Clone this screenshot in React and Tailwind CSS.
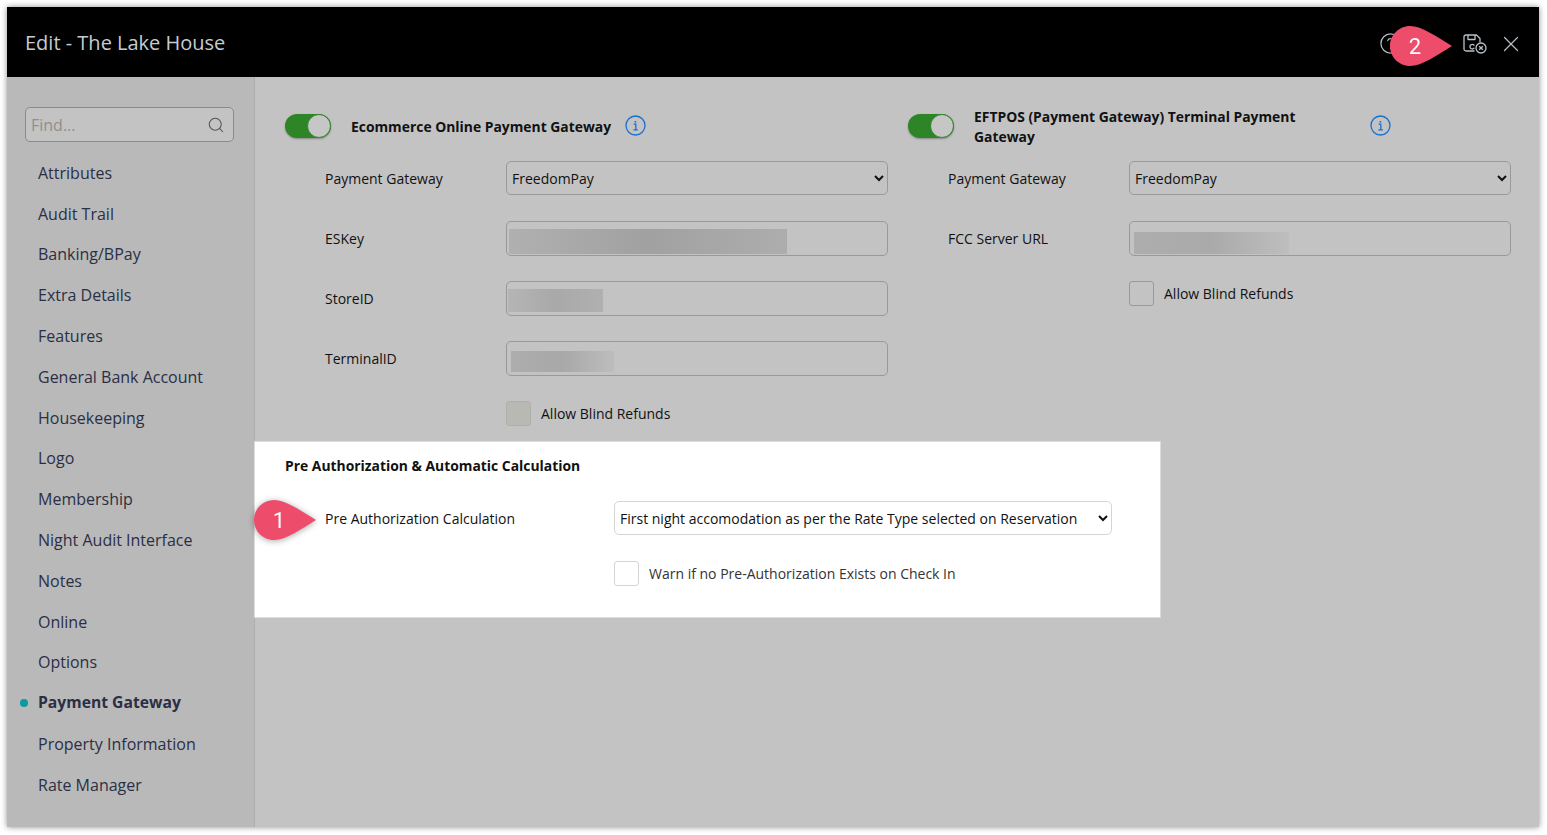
import { CircleHelp, Search, X } from "lucide-react";

const NAV_ITEMS = [
  "Attributes",
  "Audit Trail",
  "Banking/BPay",
  "Extra Details",
  "Features",
  "General Bank Account",
  "Housekeeping",
  "Logo",
  "Membership",
  "Night Audit Interface",
  "Notes",
  "Online",
  "Options",
  "Payment Gateway",
  "Property Information",
  "Rate Manager",
];

export default function App() {
  return (
    <div className="h-screen w-full overflow-hidden bg-white p-[7px] font-['Open_Sans',sans-serif]">
      <div className="flex h-[820px] w-[1532px] flex-col shadow-[0_0_6px_rgba(0,0,0,0.45)]">
        <Header />
        <div className="flex min-h-0 flex-1">
          <Sidebar />
          <main className="flex-1 border-l border-[#adadad] bg-[#c3c3c3]">
            <div className="flex h-[364px]">
              <EcommerceColumn />
              <TerminalColumn />
            </div>
            <PreAuthPanel />
          </main>
        </div>
      </div>
    </div>
  );
}

function Header() {
  return (
    <header className="relative flex h-[70px] shrink-0 items-center justify-between bg-black pr-[15px] pl-[18px]">
      <h1 className="pt-[2px] text-[20px] text-[#c5ccd3]">Edit - The Lake House</h1>
      <div className="flex items-center pt-[3px] text-[#b9c0c7]">
        <CircleHelp size={23} strokeWidth={1.3} />
        <SaveCloseIcon />
        <X size={26} strokeWidth={1.1} className="ml-[11px]" />
      </div>
      <Pin number="2" className="top-[19px] right-[87px]" />
    </header>
  );
}

function SaveCloseIcon() {
  return (
    <svg width="24" height="20" viewBox="0 0 24 20" fill="none" stroke="currentColor" strokeWidth="1.3" className="ml-[61px]">
      <path d="M11 17H3a2 2 0 0 1-2-2V3a2 2 0 0 1 2-2h10.5L17 4.5V8" strokeLinecap="round" strokeLinejoin="round" />
      <path d="M5 1v4.5h7V1" strokeLinejoin="round" />
      <path d="M11 11.2a2.3 2.3 0 1 0 0 3" strokeLinecap="round" />
      <circle cx="18" cy="14" r="5" />
      <path d="M16.2 12.2l3.6 3.6M19.8 12.2l-3.6 3.6" />
    </svg>
  );
}

function Pin({ number, className }) {
  return (
    <div className={`absolute h-[40px] w-[62px] drop-shadow-[0_1px_3px_rgba(0,0,0,0.35)] ${className}`}>
      <svg width="62" height="40" viewBox="0 0 62 40" className="absolute inset-0">
        <path d="M20 0C32 0 47 11 62 20C47 29 32 40 20 40C9 40 0 31 0 20C0 9 9 0 20 0Z" fill="#ee4c6b" />
      </svg>
      <span className="absolute top-0 left-0 flex h-[40px] w-[50px] items-center justify-center font-['Roboto',sans-serif] text-[22px] text-white">
        {number}
      </span>
    </div>
  );
}

function Sidebar() {
  return (
    <aside className="w-[247px] shrink-0 bg-[#b9b9b9] pt-[30px] pl-[18px]">
      <div className="flex h-[35px] w-[209px] items-center justify-between rounded-[5px] border border-[#8b8b8b] bg-[#c3c3c3] pr-[8px] pl-[5px]">
        <span className="text-[16px] text-[#8f8f8f]">Find...</span>
        <Search size={18} strokeWidth={1.4} className="text-[#555]" />
      </div>
      <nav className="mt-[10.4px]">
        {NAV_ITEMS.map((item) => (
          <NavItem key={item} label={item} active={item === "Payment Gateway"} />
        ))}
      </nav>
    </aside>
  );
}

function NavItem({ label, active }) {
  return (
    <div className={`relative flex h-[40.8px] items-center pl-[13px] text-[#2b2f45] ${active ? "text-[15.7px] font-bold" : "text-[16px]"}`}>
      {active && <span className="absolute left-[-5px] h-[8px] w-[8px] rounded-full bg-[#0a9a9f]" />}
      {label}
    </div>
  );
}

function EcommerceColumn() {
  return (
    <section className="w-[653px] shrink-0 pl-[30px]">
      <div className="flex h-[71px] items-center pt-[26px]">
        <Toggle />
        <h2 className="mt-[3px] ml-[20px] text-[13.88px] font-bold text-[#111]">Ecommerce Online Payment Gateway</h2>
        <InfoIcon className="ml-[14px]" />
      </div>
      <div className="pl-[40px]">
        <SelectRow label="Payment Gateway" />
        <InputRow label="ESKey" blur="mt-[6px] ml-[2px] h-[25px] w-[278px] bg-linear-to-r from-[#b0b0b0] via-[#a1a1a1] to-[#adadad]" />
        <InputRow label="StoreID" blur="mt-[4px] ml-[1px] h-[23px] w-[95px] bg-linear-to-r from-[#b5b5b5] via-[#a9a9a9] to-[#b0b0b0]" />
        <InputRow label="TerminalID" blur="mt-[6px] ml-[4px] h-[21px] w-[103px] bg-linear-to-r from-[#adadad] via-[#a8a8a8] to-[#bdbdbd]" />
        <div className="flex h-[50px] items-center pl-[181px]">
          <Checkbox className="border-[#b0b0aa] bg-[#b9b9b3]" />
          <span className="ml-[10px] text-[14px] text-[#111]">Allow Blind Refunds</span>
        </div>
      </div>
    </section>
  );
}

function TerminalColumn() {
  return (
    <section className="flex-1">
      <div className="flex h-[71px] items-center pt-[26px]">
        <Toggle />
        <h2 className="mt-[2px] ml-[20px] w-[340px] shrink-0 text-[13.88px] leading-[20px] font-bold text-[#111]">
          EFTPOS (Payment Gateway) Terminal Payment Gateway
        </h2>
        <InfoIcon className="ml-[56px]" />
      </div>
      <div className="pl-[40px]">
        <SelectRow label="Payment Gateway" />
        <InputRow label="FCC Server URL" blur="mt-[9px] ml-[4px] h-[22px] w-[155px] bg-linear-to-r from-[#adadad] via-[#aaaaaa] to-[#bebebe]" />
        <div className="flex h-[50px] items-center pl-[181px]">
          <Checkbox className="border-[#999]" />
          <span className="ml-[10px] text-[14px] text-[#111]">Allow Blind Refunds</span>
        </div>
      </div>
    </section>
  );
}

function SelectRow({ label }) {
  return (
    <div className="flex h-[60px] items-center">
      <label className="w-[181px] shrink-0 text-[14px] text-[#111]">{label}</label>
      <select
        defaultValue="FreedomPay"
        className="h-[34px] w-[382px] shrink-0 rounded-[5px] border border-[#999] pl-[1px] text-[14px] text-[#111]"
      >
        <option>FreedomPay</option>
      </select>
    </div>
  );
}

function InputRow({ label, blur }) {
  return (
    <div className="flex h-[60px] items-center">
      <label className="w-[181px] shrink-0 text-[14px] text-[#111]">{label}</label>
      <div className="flex h-[35px] w-[382px] shrink-0 items-center rounded-[5px] border border-[#999]">
        <div className={blur} />
      </div>
    </div>
  );
}

function PreAuthPanel() {
  return (
    <section className="relative -ml-[1px] h-[177px] w-[907px] border border-[#dcdcdc] bg-white pl-[30px]">
      <h3 className="pt-[14px] text-[13.88px] leading-[19px] font-bold text-[#111]">
        Pre Authorization &amp; Automatic Calculation
      </h3>
      <div className="mt-[26px] flex h-[34px] items-center pl-[40px]">
        <label className="w-[289px] shrink-0 text-[14px] text-[#111]">Pre Authorization Calculation</label>
        <select
          defaultValue="first"
          className="h-[34px] w-[498px] shrink-0 rounded-[5px] border border-[#d5d5d5] pl-[1px] text-[14px] text-[#111]"
        >
          <option value="first">First night accomodation as per the Rate Type selected on Reservation</option>
        </select>
      </div>
      <div className="mt-[26px] flex items-center pl-[329px]">
        <Checkbox className="border-[#d5d5d5]" />
        <span className="ml-[10px] text-[14px] text-[#333]">Warn if no Pre-Authorization Exists on Check In</span>
      </div>
      <Pin number="1" className="top-[58px] left-[-1px]" />
    </section>
  );
}

function Toggle() {
  return (
    <div className="flex h-[24px] w-[46px] shrink-0 items-center justify-end rounded-full bg-[#2e8528] shadow-[0_1px_2px_rgba(0,0,0,0.3)]">
      <div className="h-[24px] w-[24px] rounded-full border border-[#2e8528] bg-[#c6c6c6]" />
    </div>
  );
}

function Checkbox({ className }) {
  return <div className={`h-[25px] w-[25px] shrink-0 rounded-[3px] border ${className}`} />;
}

function InfoIcon({ className }) {
  return (
    <svg width="21" height="21" viewBox="0 0 21 21" fill="none" stroke="#1a6fd0" className={`shrink-0 ${className}`}>
      <circle cx="10.5" cy="10.5" r="9.5" strokeWidth="1.3" />
      <path d="M8.6 9.2h2.2v5.4M8.4 14.8h4.4" strokeWidth="1.3" />
      <path d="M10.4 6v1.6" strokeWidth="1.6" />
    </svg>
  );
}
